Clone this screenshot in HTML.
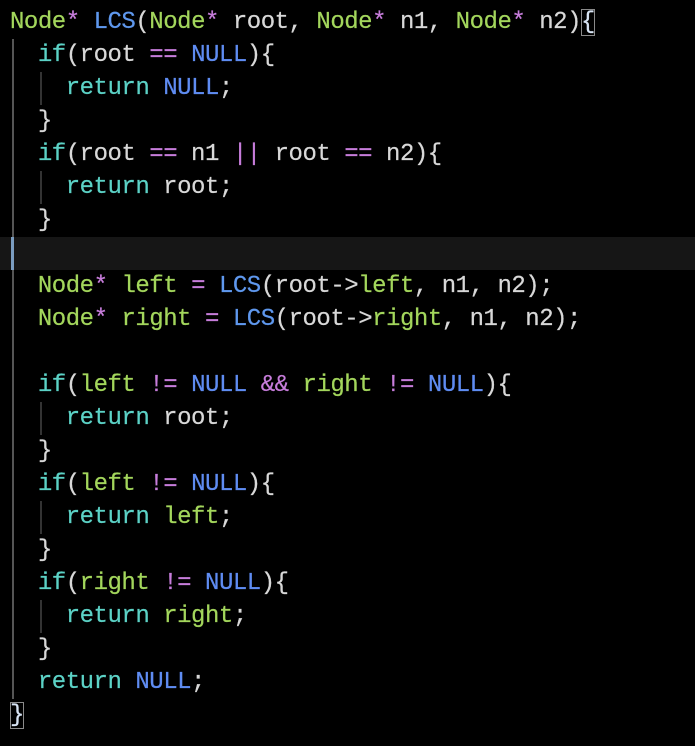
<!DOCTYPE html>
<html><head><meta charset="utf-8"><style>
html,body{margin:0;padding:0;background:#000;width:695px;height:746px;overflow:hidden}
.c{position:absolute;left:0;top:6px;width:695px;font-family:"Liberation Mono",monospace;font-size:24px;letter-spacing:-0.48px;color:#d8d8d8;-webkit-text-stroke:0.2px currentColor}
.l{height:33px;line-height:33px;padding-left:10px;position:relative;white-space:pre}
.cur{background:#161616}
.t{color:#a3d65c}.p{color:#c77ddb}.f{color:#5f98ee}.k{color:#5cd2c6}.n{color:#5f8cf2}.b{color:#d8e4f4}
.box{outline:1.5px solid #8a8a8a;outline-offset:-1px}
.g{position:absolute;width:1.5px;background:#555}
</style></head><body>
<div class="g" style="left:12px;top:39px;height:660px"></div>
<div class="g" style="left:40px;top:72px;height:33px;background:#333"></div>
<div class="g" style="left:40px;top:171px;height:33px;background:#333"></div>
<div class="g" style="left:40px;top:402px;height:33px;background:#333"></div>
<div class="g" style="left:40px;top:501px;height:33px;background:#333"></div>
<div class="g" style="left:40px;top:600px;height:33px;background:#333"></div>
<div class="c"><div class="l"><span class="t">Node</span><span class="p">*</span> <span class="f">LCS</span>(<span class="t">Node</span><span class="p">*</span> root, <span class="t">Node</span><span class="p">*</span> n1, <span class="t">Node</span><span class="p">*</span> n2)<span class="b box">{</span></div><div class="l">  <span class="k">if</span>(root <span class="p">==</span> <span class="n">NULL</span>){</div><div class="l">    <span class="k">return</span> <span class="n">NULL</span>;</div><div class="l">  }</div><div class="l">  <span class="k">if</span>(root <span class="p">==</span> n1 <span class="p">||</span> root <span class="p">==</span> n2){</div><div class="l">    <span class="k">return</span> root;</div><div class="l">  }</div><div class="l cur"><span style="position:absolute;left:11px;top:0;width:3px;height:33px;background:#7a9cc0"></span></div><div class="l">  <span class="t">Node</span><span class="p">*</span> <span class="t">left</span> <span class="p">=</span> <span class="f">LCS</span>(root-&gt;<span class="t">left</span>, n1, n2);</div><div class="l">  <span class="t">Node</span><span class="p">*</span> <span class="t">right</span> <span class="p">=</span> <span class="f">LCS</span>(root-&gt;<span class="t">right</span>, n1, n2);</div><div class="l"> </div><div class="l">  <span class="k">if</span>(<span class="t">left</span> <span class="p">!=</span> <span class="n">NULL</span> <span class="p">&amp;&amp;</span> <span class="t">right</span> <span class="p">!=</span> <span class="n">NULL</span>){</div><div class="l">    <span class="k">return</span> root;</div><div class="l">  }</div><div class="l">  <span class="k">if</span>(<span class="t">left</span> <span class="p">!=</span> <span class="n">NULL</span>){</div><div class="l">    <span class="k">return</span> <span class="t">left</span>;</div><div class="l">  }</div><div class="l">  <span class="k">if</span>(<span class="t">right</span> <span class="p">!=</span> <span class="n">NULL</span>){</div><div class="l">    <span class="k">return</span> <span class="t">right</span>;</div><div class="l">  }</div><div class="l">  <span class="k">return</span> <span class="n">NULL</span>;</div><div class="l"><span class="b box">}</span></div></div>
</body></html>
